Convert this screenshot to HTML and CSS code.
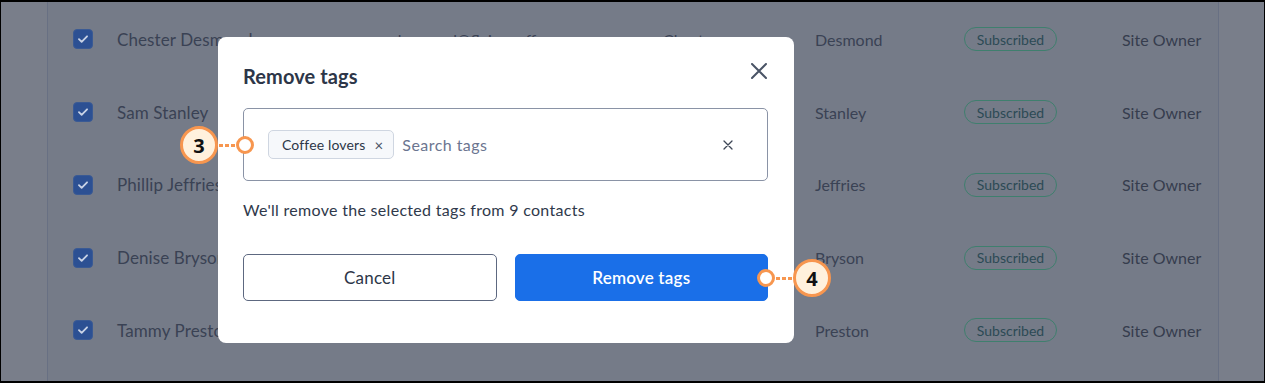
FILE: index.html
```html
<!DOCTYPE html>
<html>
<head>
<meta charset="utf-8">
<link rel="stylesheet" href="styles.css">
</head>
<body>
<div class="frame">
  <div class="side side-left"></div>
  <div class="table">
    <div class="row">
      <span class="cb"><svg viewBox="0 0 20 20" width="20" height="20"><path d="M5.5 10.2l3 3 6-6.2" fill="none" stroke="#c9d3e6" stroke-width="2" stroke-linecap="round" stroke-linejoin="round"/></svg></span>
      <span class="c-name">Chester Desmond</span>
      <span class="c-email">cdesmond@flyingcoffee.com</span>
      <span class="c-first">Chester</span>
      <span class="c-last">Desmond</span>
      <span class="c-status"><span class="badge">Subscribed</span></span>
      <span class="c-role">Site Owner</span>
    </div>
    <div class="row">
      <span class="cb"><svg viewBox="0 0 20 20" width="20" height="20"><path d="M5.5 10.2l3 3 6-6.2" fill="none" stroke="#c9d3e6" stroke-width="2" stroke-linecap="round" stroke-linejoin="round"/></svg></span>
      <span class="c-name">Sam Stanley</span>
      <span class="c-email">sstanley@flyingcoffee.com</span>
      <span class="c-first">Sam</span>
      <span class="c-last">Stanley</span>
      <span class="c-status"><span class="badge">Subscribed</span></span>
      <span class="c-role">Site Owner</span>
    </div>
    <div class="row">
      <span class="cb"><svg viewBox="0 0 20 20" width="20" height="20"><path d="M5.5 10.2l3 3 6-6.2" fill="none" stroke="#c9d3e6" stroke-width="2" stroke-linecap="round" stroke-linejoin="round"/></svg></span>
      <span class="c-name">Phillip Jeffries</span>
      <span class="c-email">pjeffries@flyingcoffee.com</span>
      <span class="c-first">Phillip</span>
      <span class="c-last">Jeffries</span>
      <span class="c-status"><span class="badge">Subscribed</span></span>
      <span class="c-role">Site Owner</span>
    </div>
    <div class="row">
      <span class="cb"><svg viewBox="0 0 20 20" width="20" height="20"><path d="M5.5 10.2l3 3 6-6.2" fill="none" stroke="#c9d3e6" stroke-width="2" stroke-linecap="round" stroke-linejoin="round"/></svg></span>
      <span class="c-name">Denise Bryson</span>
      <span class="c-email">dbryson@flyingcoffee.com</span>
      <span class="c-first">Denise</span>
      <span class="c-last">Bryson</span>
      <span class="c-status"><span class="badge">Subscribed</span></span>
      <span class="c-role">Site Owner</span>
    </div>
    <div class="row">
      <span class="cb"><svg viewBox="0 0 20 20" width="20" height="20"><path d="M5.5 10.2l3 3 6-6.2" fill="none" stroke="#c9d3e6" stroke-width="2" stroke-linecap="round" stroke-linejoin="round"/></svg></span>
      <span class="c-name">Tammy Preston</span>
      <span class="c-email">tpreston@flyingcoffee.com</span>
      <span class="c-first">Tammy</span>
      <span class="c-last">Preston</span>
      <span class="c-status"><span class="badge">Subscribed</span></span>
      <span class="c-role">Site Owner</span>
    </div>
  </div>
  <div class="side side-right"></div>

  <div class="modal">
    <div class="m-head">
      <h2 class="m-title">Remove tags</h2>
      <svg class="m-close" viewBox="0 0 16 16" width="16" height="16"><path d="M1 1L15 15M15 1L1 15" stroke="#4a5466" stroke-width="2" stroke-linecap="round"/></svg>
    </div>
    <div class="tagbox">
      <span class="chip">Coffee lovers <span class="chip-x">×</span></span>
      <span class="placeholder">Search tags</span>
      <svg class="clear" viewBox="0 0 10 10" width="10" height="10"><path d="M1 1L9 9M9 1L1 9" stroke="#3d4656" stroke-width="1.3" stroke-linecap="round"/></svg>
    </div>
    <p class="m-text">We'll remove the selected tags from 9 contacts</p>
    <div class="m-actions">
      <button class="btn btn-cancel">Cancel</button>
      <button class="btn btn-primary">Remove tags</button>
    </div>
  </div>

  <div class="callout callout-3"><span class="num">3</span><span class="dots"></span><span class="ring"></span></div>
  <div class="callout callout-4"><span class="ring"></span><span class="dots"></span><span class="num">4</span></div>
</div>
</body>
</html>
```

FILE: styles.css
```css
* { box-sizing: border-box; }
html, body { margin: 0; padding: 0; }
body {
  width: 1265px;
  height: 383px;
  overflow: hidden;
  font-family: Lato, "Open Sans", sans-serif;
  background: #000;
}
.frame {
  position: relative;
  width: 1265px;
  height: 383px;
  border: 1px solid #000;
  border-top-width: 2px;
  border-bottom-width: 2px;
  display: flex;
  background: #757b88;
}
.side {
  width: 47px;
  background: #797e8a;
  flex: none;
}
.side-left { border-right: 1px solid #687083; }
.side-right { width: 46px; border-left: 1px solid #687083; }
.table {
  flex: 1;
  padding-top: 1px;
  display: flex;
  flex-direction: column;
}
.row {
  height: 72.75px;
  flex: none;
  display: flex;
  align-items: center;
  font-size: 16px;
  color: #3a4254;
  white-space: nowrap;
}
.cb {
  width: 20px;
  height: 20px;
  border-radius: 4px;
  background: #2c5093;
  border: 1px solid #3a5a94;
  margin-left: 25px;
  display: flex;
  align-items: center;
  justify-content: center;
}
.cb svg { display: block; }
.c-name { margin-left: 24px; width: 268px; font-size: 17px; letter-spacing: 0.1px; }
.c-email { width: 278px; }
.c-first { width: 152px; }
.c-last { width: 149px; }
.c-status { width: 158px; }
.badge {
  display: inline-flex;
  align-items: center;
  justify-content: center;
  width: 93px;
  height: 24px;
  border: 1px solid #3f7f6e;
  border-radius: 12px;
  font-size: 14px;
  color: #2c4a55;
}
.c-role { color: #363d4e; }

/* modal */
.modal {
  position: absolute;
  left: 217px;
  top: 35px;
  width: 576px;
  height: 306px;
  background: #fff;
  border-radius: 8px;
  padding: 25px 26px 0 25px;
  color: #2d3648;
}
.m-head {
  height: 28px;
  display: flex;
  align-items: center;
  justify-content: space-between;
}
.m-title {
  margin: 0;
  font-size: 20px;
  font-weight: 700;
  color: #2d3648;
  letter-spacing: 0.1px;
}
.m-close { align-self: flex-start; margin-top: 1px; margin-right: 1px; }
.tagbox {
  margin-top: 18px;
  height: 73px;
  border: 1px solid #8a93a6;
  border-radius: 5px;
  display: flex;
  align-items: center;
  padding-left: 24px;
  padding-right: 34px;
}
.chip {
  height: 29px;
  display: inline-flex;
  align-items: center;
  padding: 0 10px 0 13px;
  background: #f6f8fb;
  border: 1px solid #cfd6e1;
  border-radius: 5px;
  font-size: 14px;
  letter-spacing: 0.15px;
  color: #2d3648;
}
.chip-x { margin-left: 9px; font-size: 15px; color: #4a5466; }
.placeholder {
  margin-left: 8px;
  font-size: 16px;
  letter-spacing: 0.45px;
  color: #6b7590;
  flex: 1;
}
.clear { display: block; }
.m-text {
  margin: 19px 0 0;
  line-height: 20px;
  font-size: 16px;
  letter-spacing: 0.3px;
  color: #2f394b;
}
.m-actions {
  margin-top: 34px;
  display: flex;
  gap: 18px;
}
.btn {
  flex: 1;
  height: 47px;
  border-radius: 5px;
  font-family: Lato, "Open Sans", sans-serif;
  font-size: 17px;
  letter-spacing: 0.2px;
  cursor: pointer;
}
.btn-cancel {
  background: #fff;
  border: 1px solid #5d6880;
  color: #2d3648;
}
.btn-primary {
  background: #1a6fe8;
  border: 1px solid #1a6fe8;
  color: #fff;
  font-weight: 600;
}

/* callouts */
.callout {
  position: absolute;
  display: flex;
  align-items: center;
}
.callout-3 { left: 179px; top: 124px; }
.callout-4 { left: 756px; top: 257px; }
.num {
  width: 38px;
  height: 38px;
  border-radius: 50%;
  background: #fff1dd;
  border: 3px solid #f7964f;
  display: flex;
  align-items: center;
  justify-content: center;
  font-family: "Open Sans", Lato, sans-serif;
  font-weight: 700;
  font-size: 20px;
  color: #111;
}
.dots {
  width: 16px;
  height: 3px;
  margin: 0 1px;
  background: repeating-linear-gradient(90deg, #f7964f 0 4px, transparent 4px 6px);
}
.ring {
  width: 18px;
  height: 18px;
  border-radius: 50%;
  background: #fff;
  border: 3px solid #f7964f;
}
```
